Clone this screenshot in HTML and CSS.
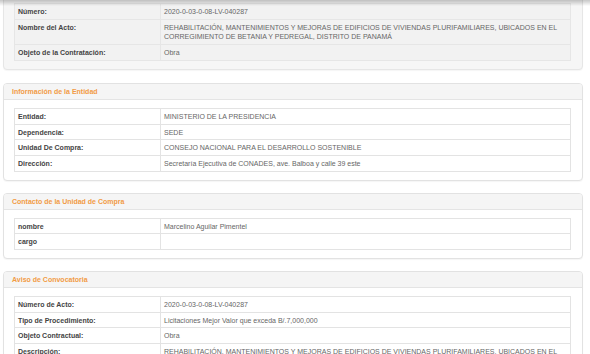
FILE: index.html
```html
<!DOCTYPE html>
<html lang="es">
<head>
    <meta charset="UTF-8">
    <title>Detalle del Acto</title>
    <link rel="stylesheet" href="styles.css">
</head>
<body>
    <!-- sombra de la barra superior -->
    <div class="top-shade"></div>

    <div class="page">
        <!-- Datos del acto (recortado arriba) -->
        <div class="panel panel-dim panel-first">
            <div class="panel-body">
                <table class="info-table">
                    <tr><th>Número:</th><td>2020-0-03-0-08-LV-040287</td></tr>
                    <tr><th>Nombre del Acto:</th><td>REHABILITACIÓN, MANTENIMIENTOS Y MEJORAS DE EDIFICIOS DE VIVIENDAS PLURIFAMILIARES, UBICADOS EN EL CORREGIMIENTO DE BETANIA Y PEDREGAL, DISTRITO DE PANAMÁ</td></tr>
                    <tr><th>Objeto de la Contratación:</th><td>Obra</td></tr>
                </table>
            </div>
        </div>

        <div class="panel">
            <div class="panel-heading">Información de la Entidad</div>
            <div class="panel-body">
                <table class="info-table">
                    <tr><th>Entidad:</th><td>MINISTERIO DE LA PRESIDENCIA</td></tr>
                    <tr><th>Dependencia:</th><td>SEDE</td></tr>
                    <tr><th>Unidad De Compra:</th><td>CONSEJO NACIONAL PARA EL DESARROLLO SOSTENIBLE</td></tr>
                    <tr><th>Dirección:</th><td>Secretaría Ejecutiva de CONADES, ave. Balboa y calle 39 este</td></tr>
                </table>
            </div>
        </div>

        <div class="panel">
            <div class="panel-heading">Contacto de la Unidad de Compra</div>
            <div class="panel-body">
                <table class="info-table">
                    <tr><th>nombre</th><td>Marcelino Aguilar Pimentel</td></tr>
                    <tr><th>cargo</th><td>&nbsp;</td></tr>
                </table>
            </div>
        </div>

        <div class="panel">
            <div class="panel-heading">Aviso de Convocatoria</div>
            <div class="panel-body">
                <table class="info-table">
                    <tr><th>Número de Acto:</th><td>2020-0-03-0-08-LV-040287</td></tr>
                    <tr><th>Tipo de Procedimiento:</th><td>Licitaciones Mejor Valor que exceda B/.7,000,000</td></tr>
                    <tr><th>Objeto Contractual:</th><td>Obra</td></tr>
                    <tr><th>Descripción:</th><td>REHABILITACIÓN, MANTENIMIENTOS Y MEJORAS DE EDIFICIOS DE VIVIENDAS PLURIFAMILIARES, UBICADOS EN EL CORREGIMIENTO DE BETANIA Y PEDREGAL, DISTRITO DE PANAMÁ</td></tr>
                </table>
            </div>
        </div>
    </div>
</body>
</html>
```

FILE: styles.css
```css
* {
    margin: 0;
    padding: 0;
    box-sizing: border-box;
}

body {
    font-family: 'Liberation Sans', Arial, sans-serif;
    font-size: 7px;
    color: #666;
    background: #fff;
    overflow: hidden;
}

/* sombra superior */
.top-shade {
    position: fixed;
    top: 0;
    left: 0;
    right: 0;
    height: 6px;
    background: linear-gradient(to bottom, rgba(0, 0, 0, 0.22), rgba(0, 0, 0, 0));
    z-index: 10;
}

.page {
    width: 580px;
    margin-left: 3px;
}

/* paneles */
.panel {
    background: #fff;
    border: 1px solid #e2e2e2;
    border-radius: 4px;
    box-shadow: 0 1px 1px rgba(0, 0, 0, 0.04);
    margin-bottom: 12px;
    overflow: hidden;
}

.panel-first {
    margin-top: -6px;
    margin-bottom: 13px;
}

.panel-dim {
    background: #f6f6f6;
    border-color: #e6e6e6;
}

.panel-heading {
    background: #f5f5f5;
    border-bottom: 1px solid #e4e4e4;
    color: #f29b45;
    font-weight: bold;
    height: 16px;
    line-height: 15px;
    padding: 0 8px;
}

.panel-body {
    padding: 8px 11px 8px 10px;
}

/* tablas */
.info-table {
    width: 100%;
    border-collapse: collapse;
    border: 1px solid #e3e3e3;
}

.info-table th,
.info-table td {
    border: 1px solid #e3e3e3;
    padding: 3px 3px 2px 3px;
    line-height: 9.7px;
    text-align: left;
    vertical-align: top;
}

.info-table th {
    width: 146px;
    color: #444;
    font-weight: bold;
}

.info-table td {
    color: #666;
}

.panel-dim .info-table th,
.panel-dim .info-table td {
    background: #f2f2f2;
    border-color: #e6e6e6;
}
```
